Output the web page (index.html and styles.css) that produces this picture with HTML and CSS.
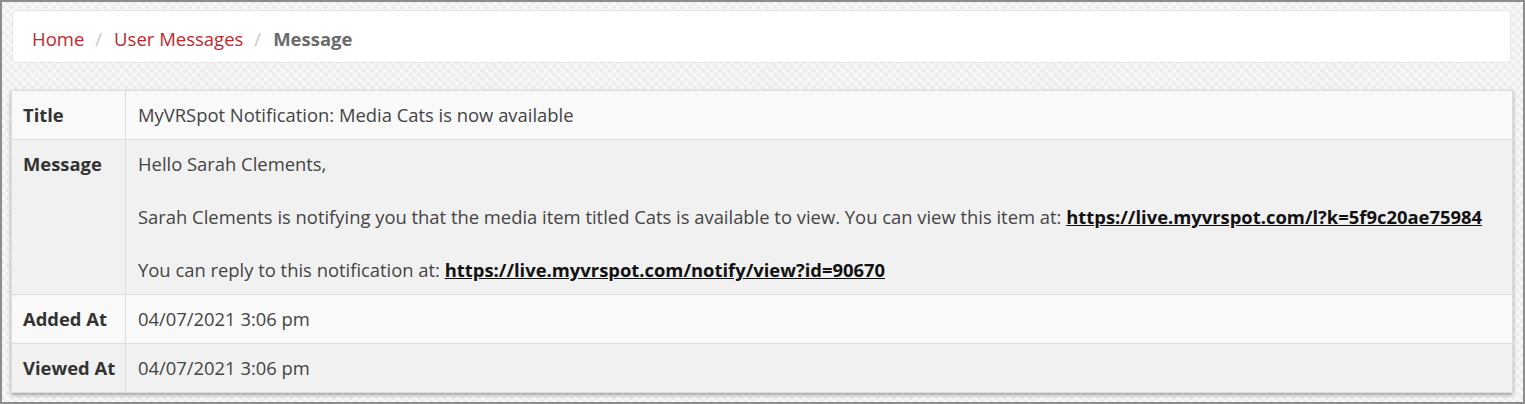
FILE: index.html
```html
<!DOCTYPE html>
<html lang="en">
<head>
<meta charset="utf-8">
<title>Message</title>
<link rel="stylesheet" href="styles.css">
</head>
<body>
<div class="frame">
  <nav class="crumbs">
    <a class="crumb-link" href="#">Home</a>
    <span class="sep">/</span>
    <a class="crumb-link" href="#">User Messages</a>
    <span class="sep">/</span>
    <span class="crumb-current">Message</span>
  </nav>
  <table class="details">
    <tr class="row-light">
      <th>Title</th>
      <td>MyVRSpot Notification: Media Cats is now available</td>
    </tr>
    <tr class="row-dark">
      <th>Message</th>
      <td>
        <p>Hello Sarah Clements,</p>
        <p>Sarah Clements is notifying you that the media item titled Cats is available to view. You can view this item at: <a class="msg-link" href="#">https://live.myvrspot.com/l?k=5f9c20ae75984</a></p>
        <p>You can reply to this notification at: <a class="msg-link" href="#">https://live.myvrspot.com/notify/view?id=90670</a></p>
      </td>
    </tr>
    <tr class="row-light">
      <th>Added At</th>
      <td>04/07/2021 3:06 pm</td>
    </tr>
    <tr class="row-dark">
      <th>Viewed At</th>
      <td>04/07/2021 3:06 pm</td>
    </tr>
  </table>
</div>
</body>
</html>
```

FILE: styles.css
```css
html, body {
  margin: 0;
  padding: 0;
  height: 100%;
}

body {
  font-family: "Open Sans", "Liberation Sans", sans-serif;
  color: #333;
}

.frame {
  box-sizing: border-box;
  height: 404px;
  border: 2px solid #8c8c8c;
  padding: 8px 10px 0 9px;
  background-color: #ededed;
  background-image:
    repeating-linear-gradient(45deg, rgba(255,255,255,0.55) 0 2px, transparent 2px 6px),
    repeating-linear-gradient(-45deg, rgba(255,255,255,0.45) 0 2px, transparent 2px 6px);
}

.crumbs {
  display: flex;
  align-items: center;
  height: 53px;
  box-sizing: border-box;
  margin: 0 2px 0 1px;
  padding: 3px 20px 0 19px;
  background: #fff;
  border: 1px solid #e6e6e6;
  border-radius: 4px;
  font-size: 18.5px;
  line-height: 25px;
}

.crumb-link {
  color: #c1272d;
  text-decoration: none;
}

.sep {
  color: #c8c8c8;
  padding: 0 12px 0 11px;
}

.crumb-current {
  color: #6b6b6b;
  font-weight: 700;
}

.details {
  width: 100%;
  margin-top: 27px;
  border-collapse: collapse;
  background: #f9f9f9;
  border: 1px solid #c9c9c9;
  box-shadow: 0 2px 4px rgba(0, 0, 0, 0.35);
  font-size: 18.4px;
  line-height: 24px;
}

.details th,
.details td {
  padding: 12px 12px;
  border: 1px solid #dedede;
  text-align: left;
  vertical-align: top;
}

.details th {
  box-sizing: border-box;
  width: 114px;
  padding-left: 11px;
  padding-right: 5px;
  font-weight: 700;
  color: #333;
  white-space: nowrap;
}

.details td {
  color: #444;
}

.row-light {
  background: #f9f9f9;
}

.row-dark {
  background: #f1f1f1;
}

.details p {
  margin: 0 0 29px;
}

.details p:last-child {
  margin-bottom: 0;
}

.msg-link {
  color: #111;
  font-weight: 700;
  text-decoration: underline;
}
```
